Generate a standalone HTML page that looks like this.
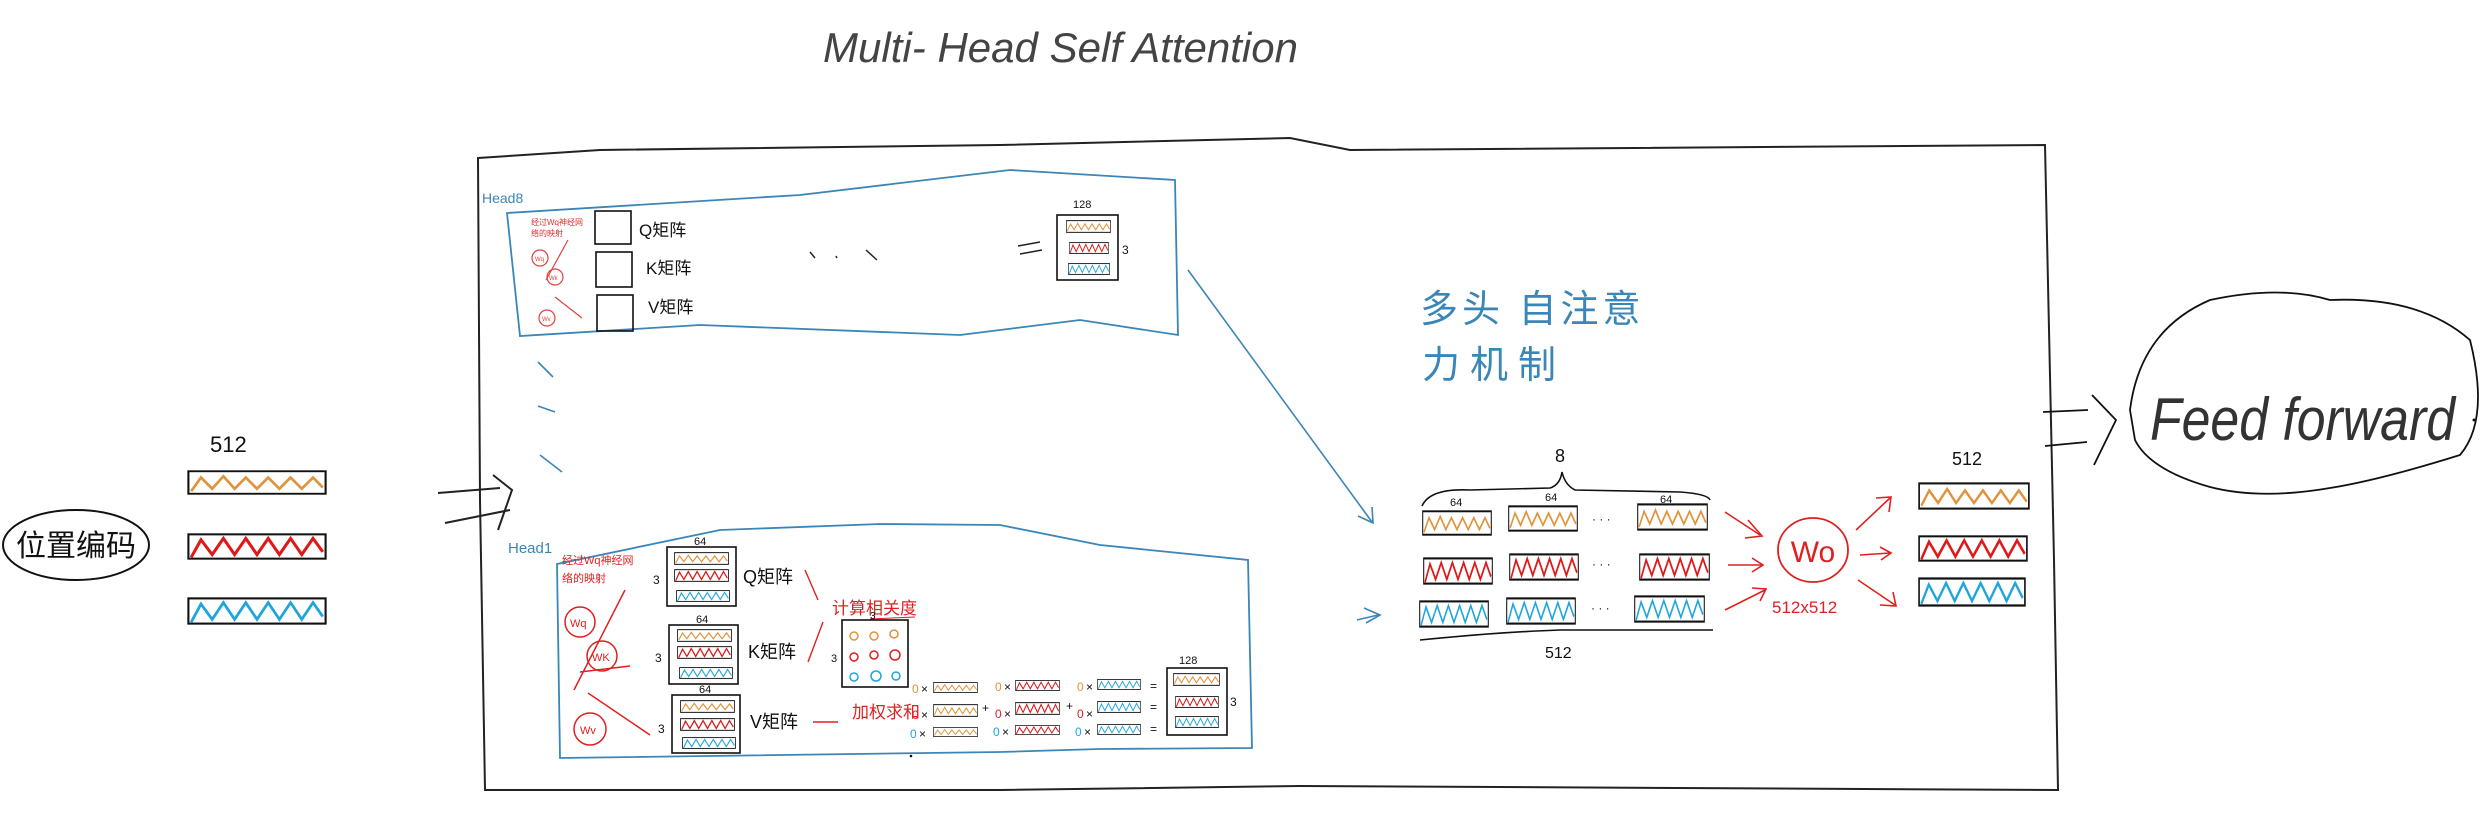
<!DOCTYPE html>
<html><head><meta charset="utf-8"><style>
html,body{margin:0;padding:0;background:#fff;width:2487px;height:816px;overflow:hidden}
svg{display:block}
text{font-family:"Liberation Sans","Noto Sans CJK SC",sans-serif}
</style></head><body>
<svg width="2487" height="816" viewBox="0 0 2487 816" xmlns="http://www.w3.org/2000/svg">
<defs>
<symbol id="vo" viewBox="0 0 100 20" preserveAspectRatio="none"><rect x="1" y="1" width="98" height="18" fill="none" stroke="#111" stroke-width="1.5"/><polyline points="3,17 10,6 18,15 26,5 34,15 42,6 50,15 58,6 66,15 74,6 82,15 90,6 97,14" fill="none" stroke="#e0933a" stroke-width="2"/></symbol>
<symbol id="vr" viewBox="0 0 100 20" preserveAspectRatio="none"><rect x="1" y="1" width="98" height="18" fill="none" stroke="#111" stroke-width="1.5"/><polyline points="3,18 10,5 18,16 26,4 34,16 42,4 50,16 58,4 66,16 74,4 82,16 90,4 97,14" fill="none" stroke="#e01818" stroke-width="2.2"/></symbol>
<symbol id="vb" viewBox="0 0 100 20" preserveAspectRatio="none"><rect x="1" y="1" width="98" height="18" fill="none" stroke="#111" stroke-width="1.5"/><polyline points="3,18 10,5 18,16 26,4 34,16 42,4 50,16 58,4 66,16 74,4 82,16 90,4 97,14" fill="none" stroke="#1ea6dc" stroke-width="2"/></symbol>
</defs>

<text x="823" y="62" font-size="42" fill="#444" letter-spacing="3" font-style="italic" textLength="478">Multi- Head  Self  Attention</text>

<path d="M478,158 L600,150 L1000,145 L1290,138 L1350,150 L2045,145 L2054,560 L2058,790 L1300,786 L1000,790 L485,790 L480,500 Z" fill="none" stroke="#222" stroke-width="2"/>

<ellipse cx="76" cy="545" rx="73" ry="35" fill="none" stroke="#111" stroke-width="2"/>
<text x="76" y="556" font-size="30" text-anchor="middle" fill="#111">位置编码</text>
<text x="210" y="452" font-size="22" fill="#111">512</text>
<use href="#vo" x="187" y="470" width="140" height="25"/>
<use href="#vr" x="187" y="533" width="140" height="27"/>
<use href="#vb" x="187" y="597" width="140" height="28"/>
<path d="M438,493 L500,488 M445,523 L510,510 M493,475 L512,490 L498,530" fill="none" stroke="#222" stroke-width="2"/>

<path d="M507,213 L800,195 L1010,170 L1175,180 L1178,335 L1080,320 L960,335 L700,325 L520,336 Z" fill="none" stroke="#3a86b8" stroke-width="1.8"/>
<text x="482" y="203" font-size="14" fill="#3a86b8">Head8</text>
<text x="531" y="225" font-size="8" fill="#e03030">经过Wq神经网</text>
<text x="531" y="236" font-size="8" fill="#e03030">络的映射</text>
<circle cx="540" cy="258" r="8" fill="none" stroke="#e04040" stroke-width="1.2"/><text x="535" y="261" font-size="6" fill="#e04040">Wq</text>
<circle cx="555" cy="277" r="8" fill="none" stroke="#e04040" stroke-width="1.2"/><text x="549" y="280" font-size="6" fill="#e04040">Wk</text>
<circle cx="547" cy="318" r="8" fill="none" stroke="#e04040" stroke-width="1.2"/><text x="542" y="321" font-size="6" fill="#e04040">Wv</text>
<path d="M568,240 L546,280 M555,297 L582,318" stroke="#e04040" stroke-width="1.2" fill="none"/>
<rect x="595" y="211" width="36" height="33" fill="none" stroke="#111" stroke-width="1.6"/>
<rect x="596" y="252" width="36" height="35" fill="none" stroke="#111" stroke-width="1.6"/>
<rect x="597" y="295" width="36" height="36" fill="none" stroke="#111" stroke-width="1.6"/>
<text x="639" y="236" font-size="17" fill="#111">Q矩阵</text>
<text x="646" y="274" font-size="17" fill="#111">K矩阵</text>
<text x="648" y="313" font-size="17" fill="#111">V矩阵</text>
<path d="M810,252 L815,258 M836,256 L837,258 M866,250 L877,260" stroke="#222" stroke-width="1.5"/>
<path d="M1018,246 L1040,242 M1020,254 L1042,250" stroke="#222" stroke-width="1.6"/>
<rect x="1057" y="215" width="61" height="65" fill="none" stroke="#111" stroke-width="1.6"/>
<text x="1073" y="208" font-size="11" fill="#111">128</text>
<text x="1122" y="254" font-size="12" fill="#111">3</text>
<use href="#vo" x="1066" y="220" width="45" height="13"/>
<use href="#vr" x="1069" y="242" width="40" height="12"/>
<use href="#vb" x="1068" y="263" width="42" height="12"/>

<path d="M538,362 L553,377 M538,406 L555,412 M540,455 L562,472" stroke="#3a86b8" stroke-width="1.6"/>

<path d="M557,564 L720,530 L880,524 L1000,525 L1100,545 L1248,560 L1252,748 L1100,749 L1000,752 L560,758 Z" fill="none" stroke="#3a86b8" stroke-width="1.8"/>
<text x="508" y="553" font-size="15" fill="#3a86b8">Head1</text>
<text x="562" y="564" font-size="11" fill="#e02020">经过Wq神经网</text>
<text x="562" y="582" font-size="11" fill="#e02020">络的映射</text>
<circle cx="580" cy="622" r="15" fill="none" stroke="#e02020" stroke-width="1.5"/><text x="570" y="627" font-size="11" fill="#e02020">Wq</text>
<circle cx="602" cy="656" r="15" fill="none" stroke="#e02020" stroke-width="1.5"/><text x="592" y="661" font-size="11" fill="#e02020">WK</text>
<circle cx="590" cy="729" r="16" fill="none" stroke="#e02020" stroke-width="1.5"/><text x="580" y="734" font-size="11" fill="#e02020">Wv</text>
<path d="M625,590 L574,690 M580,672 L630,666 M588,693 L650,735" stroke="#e02020" stroke-width="1.5" fill="none"/>
<rect x="667" y="547" width="69" height="59" fill="none" stroke="#111" stroke-width="1.6"/>
<rect x="669" y="625" width="69" height="59" fill="none" stroke="#111" stroke-width="1.6"/>
<rect x="672" y="695" width="68" height="58" fill="none" stroke="#111" stroke-width="1.6"/>
<text x="694" y="545" font-size="11" fill="#111">64</text>
<text x="696" y="623" font-size="11" fill="#111">64</text>
<text x="699" y="693" font-size="11" fill="#111">64</text>
<text x="653" y="584" font-size="12" fill="#111">3</text>
<text x="655" y="662" font-size="12" fill="#111">3</text>
<text x="658" y="733" font-size="12" fill="#111">3</text>
<use href="#vo" x="674" y="552" width="55" height="13"/><use href="#vr" x="674" y="569" width="55" height="13"/><use href="#vb" x="676" y="590" width="54" height="12"/>
<use href="#vo" x="677" y="629" width="55" height="13"/><use href="#vr" x="677" y="646" width="55" height="13"/><use href="#vb" x="679" y="667" width="54" height="12"/>
<use href="#vo" x="680" y="700" width="55" height="13"/><use href="#vr" x="680" y="718" width="55" height="13"/><use href="#vb" x="682" y="737" width="54" height="12"/>
<text x="743" y="583" font-size="18" fill="#111">Q矩阵</text>
<text x="748" y="658" font-size="18" fill="#111">K矩阵</text>
<text x="750" y="728" font-size="18" fill="#111">V矩阵</text>
<path d="M805,570 L818,600 M808,662 L823,622 M813,722 L838,722" stroke="#e02020" stroke-width="1.4" fill="none"/>
<text x="832" y="614" font-size="17" fill="#e02020">计算相关度</text>
<path d="M870,619 L915,617" stroke="#e02020" stroke-width="1"/>
<rect x="842" y="620" width="66" height="67" fill="none" stroke="#111" stroke-width="1.6"/>
<text x="870" y="619" font-size="10" fill="#111">3</text>
<text x="831" y="662" font-size="11" fill="#111">3</text>
<g fill="none" stroke-width="1.5">
<circle cx="854" cy="636" r="4" stroke="#e0933a"/><circle cx="874" cy="636" r="4" stroke="#e0933a"/><circle cx="894" cy="634" r="4" stroke="#e0933a"/>
<circle cx="854" cy="657" r="4" stroke="#e02020"/><circle cx="874" cy="655" r="4" stroke="#e02020"/><circle cx="895" cy="655" r="5" stroke="#e02020"/>
<circle cx="854" cy="677" r="4" stroke="#1ea6dc"/><circle cx="876" cy="676" r="5" stroke="#1ea6dc"/><circle cx="896" cy="676" r="4" stroke="#1ea6dc"/>
</g>
<text x="852" y="718" font-size="17" fill="#e02020">加权求和</text>
<g font-size="12">
<text x="912" y="693" fill="#e0933a">0</text><text x="921" y="693" fill="#111">×</text>
<text x="995" y="691" fill="#e0933a">0</text><text x="1004" y="691" fill="#111">×</text>
<text x="1077" y="691" fill="#e0933a">0</text><text x="1086" y="691" fill="#111">×</text>
<text x="912" y="719" fill="#e02020">0</text><text x="921" y="719" fill="#111">×</text><text x="982" y="712" fill="#111">+</text>
<text x="995" y="718" fill="#e02020">0</text><text x="1004" y="718" fill="#111">×</text><text x="1066" y="710" fill="#111">+</text>
<text x="1077" y="718" fill="#e02020">0</text><text x="1086" y="718" fill="#111">×</text>
<text x="910" y="738" fill="#1ea6dc">0</text><text x="919" y="738" fill="#111">×</text>
<text x="993" y="736" fill="#1ea6dc">0</text><text x="1002" y="736" fill="#111">×</text>
<text x="1075" y="736" fill="#1ea6dc">0</text><text x="1084" y="736" fill="#111">×</text>
<text x="1150" y="690" fill="#111">=</text><text x="1150" y="711" fill="#111">=</text><text x="1150" y="733" fill="#111">=</text>
</g>
<use href="#vo" x="933" y="682" width="45" height="11"/><use href="#vr" x="1015" y="680" width="45" height="11"/><use href="#vb" x="1097" y="679" width="44" height="11"/>
<use href="#vo" x="933" y="704" width="45" height="13"/><use href="#vr" x="1015" y="702" width="45" height="13"/><use href="#vb" x="1097" y="701" width="44" height="12"/>
<use href="#vo" x="933" y="727" width="45" height="10"/><use href="#vr" x="1015" y="725" width="45" height="10"/><use href="#vb" x="1097" y="724" width="44" height="11"/>
<rect x="1167" y="668" width="60" height="67" fill="none" stroke="#111" stroke-width="1.6"/>
<text x="1179" y="664" font-size="11" fill="#111">128</text>
<text x="1230" y="706" font-size="12" fill="#111">3</text>
<use href="#vo" x="1173" y="673" width="47" height="13"/><use href="#vr" x="1175" y="696" width="44" height="12"/><use href="#vb" x="1175" y="716" width="44" height="12"/>
<circle cx="911" cy="756" r="1.3" fill="#111"/>

<path d="M1188,270 L1372,522 M1358,516 L1373,523 L1372,507" stroke="#3a86b8" stroke-width="1.6" fill="none"/>
<path d="M1357,620 L1378,615 M1364,608 L1380,615 L1366,623" stroke="#3a86b8" stroke-width="1.6" fill="none"/>

<text x="1420" y="322" font-size="38" fill="#3a86b8" letter-spacing="4">多头 自注意</text>
<text x="1422" y="378" font-size="38" fill="#3a86b8" letter-spacing="10">力机制</text>

<text x="1555" y="462" font-size="18" fill="#111">8</text>
<path d="M1422,506 Q1430,488 1470,490 L1550,488 Q1560,485 1562,472 Q1565,485 1575,490 L1680,492 Q1708,494 1710,500" fill="none" stroke="#111" stroke-width="1.6"/>
<text x="1450" y="506" font-size="11" fill="#111">64</text><text x="1545" y="501" font-size="11" fill="#111">64</text><text x="1660" y="503" font-size="11" fill="#111">64</text>
<use href="#vo" x="1422" y="510" width="70" height="26"/><use href="#vo" x="1508" y="505" width="70" height="27"/><use href="#vo" x="1637" y="503" width="71" height="28"/>
<use href="#vr" x="1423" y="557" width="70" height="28"/><use href="#vr" x="1509" y="553" width="70" height="28"/><use href="#vr" x="1639" y="553" width="71" height="28"/>
<use href="#vb" x="1419" y="600" width="70" height="28"/><use href="#vb" x="1506" y="597" width="70" height="28"/><use href="#vb" x="1634" y="595" width="71" height="28"/>
<text x="1592" y="523" font-size="12" fill="#111">· · ·</text><text x="1592" y="568" font-size="12" fill="#111">· · ·</text><text x="1591" y="612" font-size="12" fill="#111">· · ·</text>
<path d="M1420,640 Q1500,632 1560,630 L1713,630" stroke="#111" stroke-width="1.6" fill="none"/>
<text x="1545" y="658" font-size="16" fill="#111">512</text>
<ellipse cx="1813" cy="550" rx="35" ry="32" fill="none" stroke="#e02020" stroke-width="1.8"/>
<text x="1813" y="562" font-size="30" text-anchor="middle" fill="#e02020">Wo</text>
<text x="1772" y="613" font-size="17" fill="#e02020">512x512</text>
<g stroke="#e02020" stroke-width="1.6" fill="none">
<path d="M1725,512 L1760,535 M1748,520 L1762,536 L1745,538"/>
<path d="M1728,565 L1762,565 M1752,558 L1763,565 L1752,572"/>
<path d="M1725,610 L1765,590 M1752,588 L1766,589 L1760,601"/>
<path d="M1856,530 L1890,498 M1876,498 L1891,497 L1889,512"/>
<path d="M1860,555 L1890,553 M1880,547 L1891,553 L1881,560"/>
<path d="M1858,580 L1895,605 M1880,605 L1896,606 L1893,592"/>
</g>
<text x="1952" y="465" font-size="18" fill="#111">512</text>
<use href="#vo" x="1918" y="482" width="112" height="28"/>
<use href="#vr" x="1918" y="535" width="110" height="27"/>
<use href="#vb" x="1918" y="577" width="108" height="30"/>

<path d="M2043,412 L2088,410 M2045,446 L2087,442 M2092,395 L2116,420 L2094,465" stroke="#111" stroke-width="1.8" fill="none"/>
<path d="M2130,410 Q2140,330 2210,300 Q2280,285 2330,300 Q2420,296 2470,340 Q2490,420 2460,455 Q2380,480 2330,488 Q2260,500 2210,487 Q2150,470 2135,440 Z" fill="none" stroke="#111" stroke-width="1.8"/>
<text x="2150" y="440" font-size="60" fill="#333" font-style="italic" textLength="305" lengthAdjust="spacingAndGlyphs">Feed forward</text>
<circle cx="2474" cy="420" r="1.5" fill="#111"/>
</svg>
</body></html>
